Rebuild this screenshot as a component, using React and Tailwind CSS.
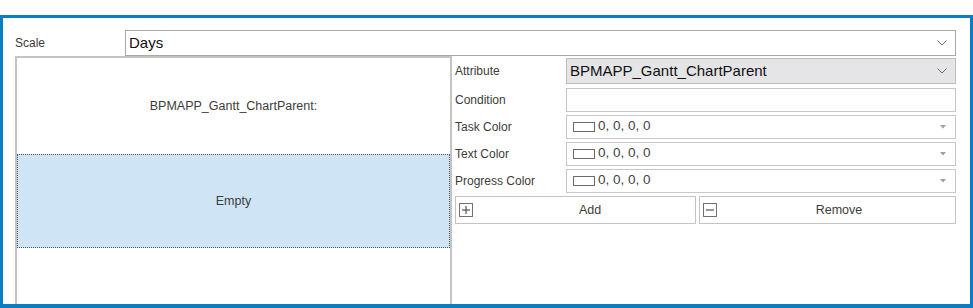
import React from "react";

function Chevron() {
  return (
    <svg width="10" height="6" viewBox="0 0 10 6" className="shrink-0">
      <path d="M0.5 0.5 L5 5 L9.5 0.5" fill="none" stroke="#6b6b6b" strokeWidth="1" />
    </svg>
  );
}

function Caret() {
  return (
    <svg width="6" height="4" viewBox="0 0 6 4" className="shrink-0">
      <path d="M0 0 L6 0 L3 3.5 Z" fill="#a0a0a0" />
    </svg>
  );
}

function ColorRow({ label }) {
  return (
    <div className="flex h-[27px] items-center">
      <div className="w-[111px] text-[12px] text-[#3c3c3c]">{label}</div>
      <div className="flex h-[24px] flex-1 items-center border border-[#c8c8c8] bg-white pl-[6px] pr-[9px]">
        <div className="h-[10px] w-[22px] border border-[#6a6a6a] bg-white" />
        <span className="ml-[3px] flex-1 text-[13.5px] text-[#444]">0, 0, 0, 0</span>
        <Caret />
      </div>
    </div>
  );
}

function SquareIcon({ plus }) {
  return (
    <svg width="14" height="14" viewBox="0 0 14 14" className="shrink-0">
      <rect x="0.5" y="0.5" width="13" height="13" fill="white" stroke="#707070" />
      <path d="M3 7 H11" stroke="#505050" strokeWidth="1.2" />
      {plus && <path d="M7 3 V11" stroke="#505050" strokeWidth="1.2" />}
    </svg>
  );
}

export default function App() {
  return (
    <div className="h-[308px] w-[973px] bg-white pt-[15px] font-['Liberation_Sans',Arial,sans-serif]">
      <div className="flex h-[293px] flex-col border-[3px] border-b-[4px] border-[#0a7ec4] bg-white">
        <div className="mt-[12px] flex h-[26px] items-center pl-[12px] pr-[14px]">
          <div className="w-[110px] text-[12px] text-[#3c3c3c]">Scale</div>
          <div className="flex h-[26px] flex-1 items-center border border-[#a9a9a9] bg-white pl-[3px] pr-[8px]">
            <span className="flex-1 text-[15px] text-[#111]">Days</span>
            <Chevron />
          </div>
        </div>

        <div className="flex flex-1 pl-[12px] pr-[14px]">
          <div className="flex w-[437px] flex-col border-x-2 border-t-2 border-[#c4c4c4]">
            <div className="flex h-[96px] items-center justify-center text-[12.5px] text-[#3c3c3c]">
              BPMAPP_Gantt_ChartParent:
            </div>
            <div className="flex h-[94px] items-center justify-center border border-dotted border-[#555] bg-[#cfe5f5] text-[12.5px] text-[#3c3c3c]">
              Empty
            </div>
          </div>

          <div className="flex flex-1 flex-col pl-[3px] pt-[2px]">
            <div className="flex h-[26px] items-center">
              <div className="w-[111px] text-[12px] text-[#3c3c3c]">Attribute</div>
              <div className="flex h-[26px] flex-1 items-center border border-[#bdbdbd] bg-[#e5e4e6] pl-[3px] pr-[8px]">
                <span className="flex-1 text-[15px] text-[#111]">BPMAPP_Gantt_ChartParent</span>
                <Chevron />
              </div>
            </div>
            <div className="mt-[2px] flex h-[27px] items-center">
              <div className="w-[111px] text-[12px] text-[#3c3c3c]">Condition</div>
              <div className="h-[24px] flex-1 border border-[#c8c8c8] bg-white" />
            </div>
            <ColorRow label="Task Color" />
            <ColorRow label="Text Color" />
            <ColorRow label="Progress Color" />
            <div className="mt-[2px] flex h-[28px] gap-[3px]">
              <button className="flex w-[241px] items-center border border-[#c4c4c4] bg-white pl-[3px] text-[12.5px] text-[#3c3c3c]">
                <SquareIcon plus />
                <span className="flex-1 pl-[12px] text-center">Add</span>
              </button>
              <button className="flex flex-1 items-center border border-[#c4c4c4] bg-white pl-[3px] text-[12.5px] text-[#3c3c3c]">
                <SquareIcon />
                <span className="flex-1 pl-[6px] text-center">Remove</span>
              </button>
            </div>
          </div>
        </div>
      </div>
    </div>
  );
}
